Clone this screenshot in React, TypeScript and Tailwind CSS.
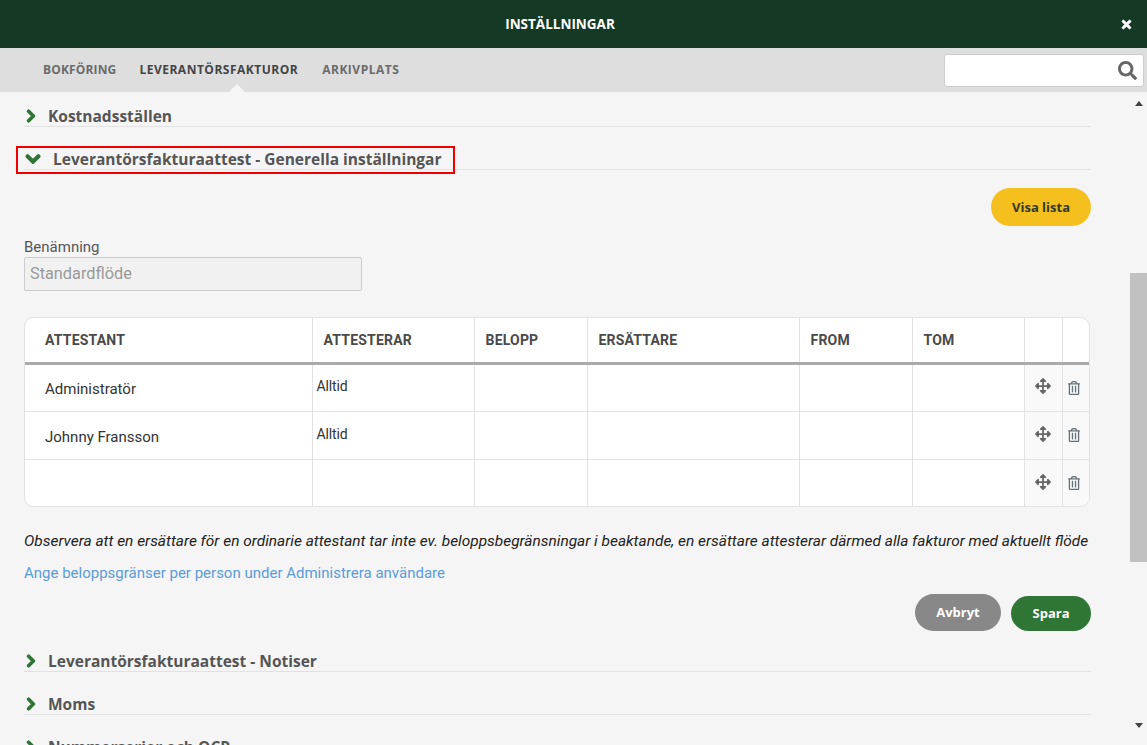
import { FaArrowsAlt, FaChevronDown, FaChevronRight, FaRegTrashAlt, FaSearch, FaTimes } from "react-icons/fa";

const heading = "font-[Open_Sans,sans-serif]";

function Section({ title, className = "" }: { title: string; className?: string }) {
  return (
    <div className={`flex h-[22px] items-center border-b border-[#e2e2e2] ${className}`}>
      <FaChevronRight stroke="currentColor" strokeWidth={50} className="h-[14px] w-[14px] text-[#2e7536]" />
      <span className={`${heading} ml-[10px] pt-[2px] text-[15.5px] font-bold text-[#555555]`}>{title}</span>
    </div>
  );
}

const rows = [
  { name: "Administratör", when: "Alltid" },
  { name: "Johnny Fransson", when: "Alltid" },
  { name: "", when: "" },
];

const columns = ["ATTESTANT", "ATTESTERAR", "BELOPP", "ERSÄTTARE", "FROM", "TOM", "", ""];

export default function App() {
  return (
    <div className="flex h-[745px] w-[1147px] flex-col overflow-hidden bg-[#f5f5f5] font-[Roboto,sans-serif]">
      {/* Header */}
      <div className="relative flex h-[48px] shrink-0 items-center justify-center bg-[#143a25] pr-[27px]">
        <span className={`${heading} text-[13.5px] font-bold text-white`}>INSTÄLLNINGAR</span>
        <FaTimes stroke="currentColor" strokeWidth={30} className="absolute top-[18px] right-[14px] h-[13px] w-[13px] text-white" />
      </div>

      {/* Tabs */}
      <div className="relative flex h-[44px] shrink-0 items-center justify-between bg-[#dedede] pr-[3px] pl-[43px]">
        <div className={`${heading} flex gap-[24px] text-[12px] font-bold tracking-[0.5px] text-[#6b6b6b]`}>
          <span className="tracking-[0.15px]">BOKFÖRING</span>
          <span className="ml-[-1px] text-[#444444]">LEVERANTÖRSFAKTUROR</span>
          <span>ARKIVPLATS</span>
        </div>
        <div className="flex h-[33px] w-[200px] items-center justify-end rounded-[3px] border border-[#cccccc] bg-white pr-[6px]">
          <FaSearch className="h-[19px] w-[19px] text-[#666666]" />
        </div>
        <div className="absolute bottom-0 left-[229px] h-0 w-0 border-x-[8px] border-b-[8px] border-x-transparent border-b-[#f5f5f5]" />
      </div>

      <div className="flex min-h-0 flex-1">
        {/* Content */}
        <div className="min-w-0 flex-1 overflow-hidden pt-[13px] pr-[39px] pl-[24px]">
          <Section title="Kostnadsställen" />

          <div className="relative mt-[21px] flex h-[22px] items-center border-b border-[#e2e2e2]">
            <FaChevronDown stroke="currentColor" strokeWidth={50} className="ml-[1px] h-[16px] w-[16px] text-[#2e7536]" />
            <span className={`${heading} ml-[12px] pt-[2px] text-[15.5px] font-bold text-[#555555]`}>
              Leverantörsfakturaattest - Generella inställningar
            </span>
            <div className="absolute top-[-2px] left-[-8px] h-[28px] w-[439px] border-2 border-[#ee0000]" />
          </div>

          <div className="mt-[18px] flex justify-end">
            <button className={`${heading} h-[38px] w-[100px] rounded-full bg-[#f5bf1d] pt-[1px] text-[13px] font-bold text-[#2f3b25]`}>
              Visa lista
            </button>
          </div>

          <div className="mt-[13px] text-[15px] leading-[16px] text-[#555555]">Benämning</div>
          <div className="mt-[2px] flex h-[34px] w-[338px] items-center rounded-[2px] border border-[#cccccc] bg-[#f1f1f1] px-[5px] text-[16.3px] text-[#999999]">
            Standardflöde
          </div>

          {/* Table */}
          <div className="mt-[26px] h-[190px] w-[1066px] overflow-hidden rounded-[10px] border border-[#e2e2e2] bg-white">
            <table className="w-full table-fixed border-collapse">
              <colgroup>
                <col className="w-[287px]" />
                <col className="w-[162px]" />
                <col className="w-[113px]" />
                <col className="w-[212px]" />
                <col className="w-[113px]" />
                <col className="w-[112px]" />
                <col className="w-[38px]" />
                <col />
              </colgroup>
              <thead>
                <tr className="h-[45px] border-b-[3px] border-[#aaaaaa]">
                  {columns.map((c, i) => (
                    <th
                      key={i}
                      className={`border-r border-[#e2e2e2] pt-[1px] text-left text-[14px] font-bold tracking-[0.2px] text-[#4a4a4a] last:border-r-0 ${i === 0 ? "pl-[20px]" : "pl-[11px]"}`}
                    >
                      {c}
                    </th>
                  ))}
                </tr>
              </thead>
              <tbody>
                {rows.map((r, i) => (
                  <tr key={i} className="h-[48px] border-b border-[#e2e2e2] text-[#333333] last:border-b-0">
                    <td className="border-r border-[#e2e2e2] pt-[4px] pl-[20px] text-[15px]">{r.name}</td>
                    <td className="border-r border-[#e2e2e2] pb-[2px] pl-[4px] text-[14px] tracking-[-0.15px]">{r.when}</td>
                    <td className="border-r border-[#e2e2e2]" />
                    <td className="border-r border-[#e2e2e2]" />
                    <td className="border-r border-[#e2e2e2]" />
                    <td className="border-r border-[#e2e2e2]" />
                    <td className="border-r border-[#e2e2e2] bg-[#f8f9f8]">
                      <FaArrowsAlt className="mx-auto mb-[3px] h-[16px] w-[16px] text-[#666666]" />
                    </td>
                    <td className="bg-[#f8f9f8] pr-[4px]">
                      <FaRegTrashAlt className="mx-auto h-[14px] w-[14px] text-[#66727a]" />
                    </td>
                  </tr>
                ))}
              </tbody>
            </table>
          </div>

          <p className="mt-[25px] text-[15.44px] leading-[18px] whitespace-nowrap text-[#222222] italic">
            Observera att en ersättare för en ordinarie attestant tar inte ev. beloppsbegränsningar i beaktande, en ersättare attesterar därmed alla fakturor med aktuellt flöde
          </p>
          <p className="mt-[14px] text-[15px] leading-[18px] text-[#5a9bdc]">
            Ange beloppsgränser per person under Administrera användare
          </p>

          <div className="mt-[12px] flex items-end justify-end gap-[10px]">
            <button className={`${heading} h-[37px] w-[86px] rounded-full bg-[#888888] pt-[1px] text-[13px] font-bold text-white`}>
              Avbryt
            </button>
            <button className={`${heading} h-[35px] w-[80px] rounded-full bg-[#2e7536] text-[13px] font-bold text-white`}>
              Spara
            </button>
          </div>

          <Section title="Leverantörsfakturaattest - Notiser" className="mt-[19px]" />
          <Section title="Moms" className="mt-[21px]" />
          <Section title="Nummerserier och OCR" className="mt-[21px]" />
        </div>

        {/* Scrollbar */}
        <div className="flex w-[17px] shrink-0 flex-col bg-[#f5f5f5]">
          <div className="mt-[9px] flex h-[6px] justify-center">
            <div className="h-0 w-0 border-x-[4.5px] border-b-[5px] border-x-transparent border-b-[#444444]" />
          </div>
          <div className="mt-[166px] h-[289px] w-full bg-[#c1c1c1]" />
          <div className="mt-[161px] flex h-[6px] justify-center">
            <div className="h-0 w-0 border-x-[4.5px] border-t-[5px] border-x-transparent border-t-[#444444]" />
          </div>
        </div>
      </div>
    </div>
  );
}
